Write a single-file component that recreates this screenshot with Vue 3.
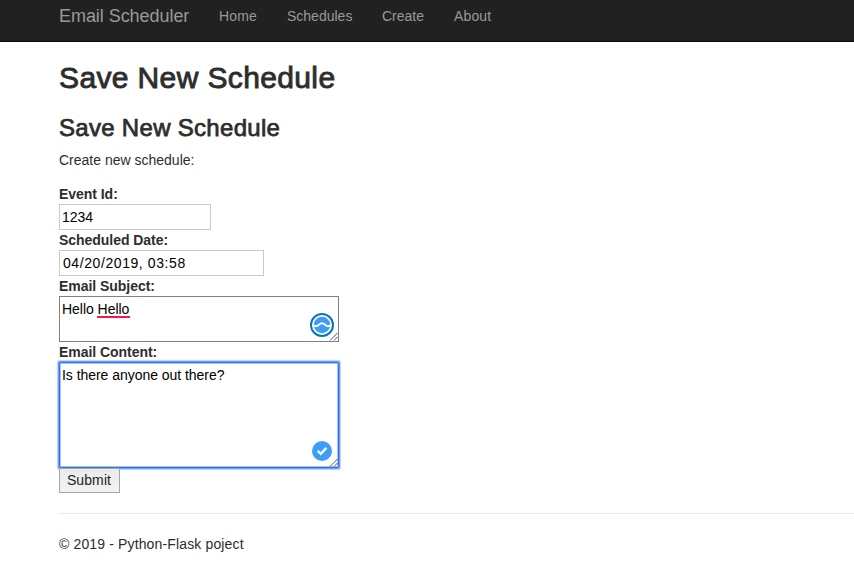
<script setup>
const links = [
  { name: 'Home', cls: 'home' },
  { name: 'Schedules', cls: 'schedules' },
  { name: 'Create', cls: 'create' },
  { name: 'About', cls: 'about' },
]
</script>

<template>
  <div class="page">
    <nav class="navbar">
      <a class="brand">Email Scheduler</a>
      <a v-for="l in links" :key="l.name" class="link" :class="l.cls">{{ l.name }}</a>
    </nav>
    <main class="container">
      <h1>Save New Schedule</h1>
      <h2>Save New Schedule</h2>
      <p class="lead">Create new schedule:</p>
      <form class="form" @submit.prevent>
        <label>Event Id:</label>
        <input class="field id" type="text" value="1234" />
        <label>Scheduled Date:</label>
        <input class="field date" type="text" value="04/20/2019, 03:58" />
        <label>Email Subject:</label>
        <div class="area subject">
          <span>Hello <span class="typo">Hello</span></span>
          <svg class="badge wave" viewBox="0 0 24 24">
            <circle cx="12" cy="12" r="11" fill="#fff" stroke="#0b74b5" stroke-width="2" />
            <circle cx="12" cy="12" r="8.3" fill="#3d9cf8" />
            <path d="M3.500 12.300Q5.500 13.800 7.200 12.900C9.200 11.700 9.800 10.300 12 10.300C14.200 10.300 14.800 11.700 16.800 12.900Q18.500 13.800 20.500 12.300" fill="none" stroke="#fff" stroke-width="2.100" />
          </svg>
          <svg class="grip" viewBox="0 0 9 9"><path d="M1 8.500L8.500 1M5 8.500L8.500 5" /></svg>
        </div>
        <label>Email Content:</label>
        <div class="area content">
          <span>Is there anyone out there?</span>
          <svg class="badge check" viewBox="0 0 20 20">
            <circle cx="10" cy="10" r="10" fill="#3d9cf8" />
            <path d="M5.700 9.900L8.800 12.900L14.500 6.800" fill="none" stroke="#fff" stroke-width="2.300" />
          </svg>
          <svg class="grip" viewBox="0 0 9 9"><path d="M1 8.500L8.500 1M5 8.500L8.500 5" /></svg>
        </div>
        <button class="submit">Submit</button>
      </form>
      <hr />
      <footer>© 2019 - Python-Flask poject</footer>
    </main>
  </div>
</template>

<style>
body {
  background: #fff;
  overflow: hidden;
}
</style>

<style scoped>
.page {
  height: 585px;
  font: 14px/20px "Helvetica Neue", Helvetica, "Liberation Sans", Arial, sans-serif;
  color: #2d2d2d;
}
.navbar {
  box-sizing: border-box;
  height: 42px;
  background: #212121;
  border-bottom: 1px solid #080808;
  padding: 6px 0 0 59px;
  display: flex;
  color: #999;
}
.brand {
  width: 160px;
  font-size: 18px;
  letter-spacing: -0.05px;
  white-space: nowrap;
}
.link {
  margin-right: 30px;
}
.home { width: 38px; letter-spacing: 0.15px; }
.schedules { width: 65px; }
.create { width: 42px; }
.about { letter-spacing: 0.15px; }
.container {
  padding-left: 59px;
}
h1, h2 {
  margin: 0;
  font-weight: 400;
  -webkit-text-stroke: 0.9px #2d2d2d;
}
h1 {
  padding-top: 19px;
  font-size: 30px;
  line-height: 33px;
  letter-spacing: 0.37px;
}
h2 {
  padding-top: 21px;
  font-size: 24px;
  line-height: 26px;
  letter-spacing: 0.3px;
  -webkit-text-stroke-width: 0.75px;
}
.lead {
  margin: 9px 0 14px;
}
.form {
  display: flex;
  flex-direction: column;
  align-items: flex-start;
}
label {
  font-weight: 700;
  letter-spacing: -0.04px;
}
.field {
  box-sizing: border-box;
  height: 26px;
  margin: 0;
  border: 1px solid #c9c9c9;
  background: #fff;
  padding: 1px 2px;
  font: inherit;
  color: #000;
  outline: none;
}
.id { width: 152px; }
.date {
  width: 205px;
  padding-left: 3px;
  letter-spacing: 0.58px;
}
.area {
  box-sizing: border-box;
  position: relative;
  width: 280px;
  border: 1px solid #808080;
  padding: 2px;
  color: #000;
  letter-spacing: -0.04px;
}
.subject { height: 46px; }
.content {
  height: 106px;
  border-color: #3873d9;
  border-radius: 1px;
  box-shadow: 0 0 0 1px #6aa1f2, 0 0 1px 2px #b5d3fb, inset 0 0 0 1px #a3c2f3;
}
.typo {
  display: inline-block;
  position: relative;
}
.typo::after {
  content: "";
  position: absolute;
  left: -1px;
  right: -1px;
  top: 17px;
  height: 2px;
  background: #f5194c;
}
.badge {
  position: absolute;
}
.wave {
  width: 24px;
  height: 24px;
  right: 4px;
  bottom: 4px;
}
.check {
  width: 20px;
  height: 20px;
  right: 6px;
  bottom: 6px;
}
.grip {
  position: absolute;
  width: 9px;
  height: 9px;
  right: 0;
  bottom: 0;
  fill: none;
  stroke: #444;
  stroke-width: 0.9;
}
.submit {
  position: relative;
  box-sizing: border-box;
  width: 61px;
  height: 25px;
  margin: 0;
  padding: 0 1px 2px 0;
  border: 1px solid #a6a6a6;
  background: linear-gradient(#eaeaea, #f3f3f3);
  font: inherit;
  color: #222;
  letter-spacing: 0.1px;
}
hr {
  margin: 20px 0;
  border: 0;
  height: 1px;
  background: #e8e8e8;
}
footer {
  letter-spacing: 0.14px;
}
</style>
